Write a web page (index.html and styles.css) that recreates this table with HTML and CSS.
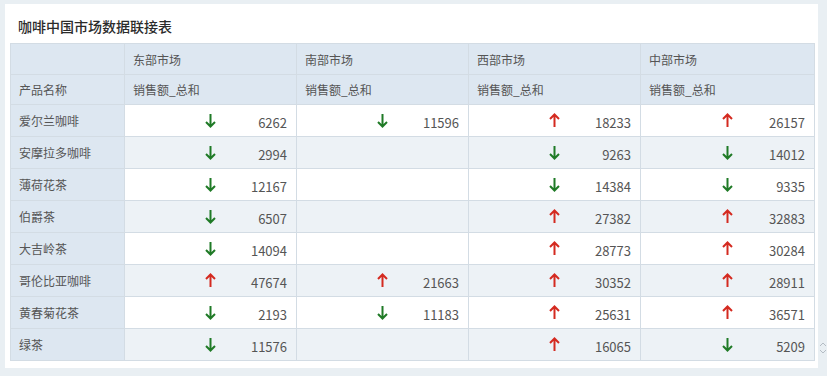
FILE: index.html
```html
<!DOCTYPE html>
<html lang="zh">

<head>
    <meta charset="UTF-8" />
    <title>咖啡中国市场数据联接表</title>
    <link rel="stylesheet" href="styles.css">
</head>

<body>
    <div class="page">
        <div class="card">
            <h2 class="title">咖啡中国市场数据联接表</h2>

            <table class="grid">
                <colgroup>
                    <col class="c-name">
                    <col class="c-val">
                    <col class="c-val">
                    <col class="c-val">
                    <col class="c-last">
                </colgroup>
                <thead>
                    <tr class="h1">
                        <th></th>
                        <th>东部市场</th>
                        <th>南部市场</th>
                        <th>西部市场</th>
                        <th>中部市场</th>
                    </tr>
                    <tr class="h2">
                        <th>产品名称</th>
                        <th>销售额_总和</th>
                        <th>销售额_总和</th>
                        <th>销售额_总和</th>
                        <th>销售额_总和</th>
                    </tr>
                </thead>
                <tbody id="rows"></tbody>
            </table>
        </div>
        <div class="scroller">
            <svg width="8" height="14" viewBox="0 0 8 14">
                <path d="M1 5 L4 2 L7 5 M1 9 L4 12 L7 9" fill="none" stroke="#b4bcc4" stroke-width="1" />
            </svg>
        </div>
    </div>

    <script>
        const data = [
            ['爱尔兰咖啡', [-1, 6262], [-1, 11596], [1, 18233], [1, 26157]],
            ['安摩拉多咖啡', [-1, 2994], null, [-1, 9263], [-1, 14012]],
            ['薄荷花茶', [-1, 12167], null, [-1, 14384], [-1, 9335]],
            ['伯爵茶', [-1, 6507], null, [1, 27382], [1, 32883]],
            ['大吉岭茶', [-1, 14094], null, [1, 28773], [1, 30284]],
            ['哥伦比亚咖啡', [1, 47674], [1, 21663], [1, 30352], [1, 28911]],
            ['黄春菊花茶', [-1, 2193], [-1, 11183], [1, 25631], [1, 36571]],
            ['绿茶', [-1, 11576], null, [1, 16065], [-1, 5209]]
        ];

        const up = '<svg class="arrow up" width="11" height="15" viewBox="0 0 11 15"><path d="M5.5 14 V1.5 M1 6 L5.5 1.5 L10 6" /></svg>';
        const down = '<svg class="arrow down" width="11" height="15" viewBox="0 0 11 15"><path d="M5.5 1 V13.5 M1 9 L5.5 13.5 L10 9" /></svg>';

        const body = document.getElementById('rows');
        data.forEach(row => {
            const tr = document.createElement('tr');
            let html = '<td class="name">' + row[0] + '</td>';
            for (let i = 1; i < row.length; i++) {
                const v = row[i];
                if (!v) {
                    html += '<td></td>';
                } else {
                    html += '<td><div class="val"><span></span>' + (v[0] > 0 ? up : down) +
                        '<span class="num">' + v[1] + '</span></div></td>';
                }
            }
            tr.innerHTML = html;
            body.appendChild(tr);
        });
    </script>
</body>

</html>
```

FILE: styles.css
```css
* {
    box-sizing: border-box;
    font-family: "Noto Sans CJK SC", "Noto Sans", sans-serif;
}

body {
    margin: 0;
    background-color: #e9eff3;
    height: 100vh;
}

.page {
    display: flex;
    padding: 4px 0 0 5px;
}

.card {
    width: 813px;
    height: 364px;
    background-color: white;
    padding: 0 4px 0 5px;
}

.title {
    margin: 0;
    padding: 13px 0 8px 8px;
    font-size: 14px;
    line-height: 18px;
    font-weight: 500;
    color: #2b2b2b;
}

.grid {
    border-collapse: collapse;
    table-layout: fixed;
    width: 804px;
}

.c-name {
    width: 114px;
}

.c-val {
    width: 172px;
}

.c-last {
    width: 174px;
}

.grid th,
.grid td {
    border: 1px solid #d3dce4;
    padding: 0 8px;
    font-size: 12px;
    color: #555;
    text-align: left;
    font-weight: normal;
}

.grid thead th {
    background-color: #dde7f1;
}

.h1 th {
    height: 31px;
}

.h2 th {
    height: 30px;
}

.grid td {
    height: 32px;
    background-color: white;
}

.grid tbody tr:nth-child(even) td {
    background-color: #edf2f6;
}

.grid td.name,
.grid tbody tr:nth-child(even) td.name {
    background-color: #dde7f1;
}

.val {
    display: grid;
    grid-template-columns: 1fr auto 1fr;
    align-items: center;
    padding-right: 1px;
}

.num {
    text-align: right;
    font-size: 13px;
    padding-top: 3px;
}

.arrow {
    display: block;
    fill: none;
    stroke-width: 2;
}

.arrow.up {
    stroke: #d42a20;
}

.arrow.down {
    stroke: #1f7a26;
}

.scroller {
    width: 9px;
    display: flex;
    align-items: flex-end;
    justify-content: center;
    padding-bottom: 13px;
}
```
